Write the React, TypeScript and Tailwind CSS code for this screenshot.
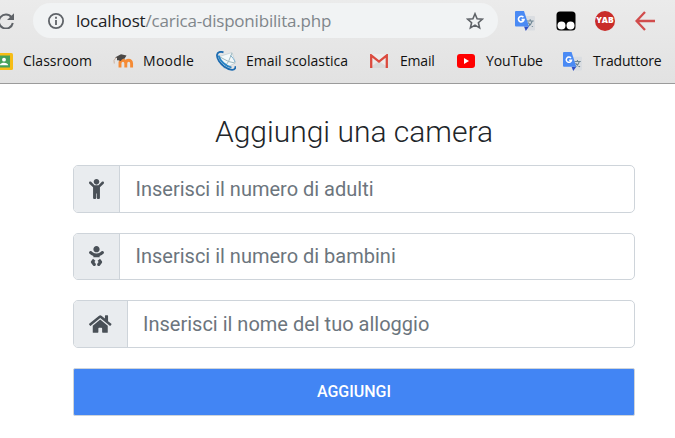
import React from "react";
import { FaBaby, FaChild, FaHome } from "react-icons/fa";

function TranslateIcon({ className }: { className: string }) {
  return (
    <svg viewBox="0 0 20 20" className={className}>
      <path d="M8.5 5H19a1 1 0 0 1 1 1v12.5a1 1 0 0 1-1 1h-6z" fill="#dadde1" />
      <path d="M12 10h6.700M15.200 8.300V10M17.200 10.200c-.7 2.500-2.300 4.300-4.200 5.300M13.200 11.500c1 2 2.600 3.300 4.800 4" stroke="#6f8794" strokeWidth="1.2" fill="none" />
      <path d="M9 15.500h5L10.800 20z" fill="#2f4fc4" />
      <path d="M1 0h8l5 15.500H1a1 1 0 0 1-1-1V1a1 1 0 0 1 1-1z" fill="#4a8af4" />
      <path d="M8.400 6.300A2.800 2.800 0 1 0 9 8.600H6.500" stroke="#fff" strokeWidth="1.6" fill="none" />
    </svg>
  );
}

function ReloadIcon() {
  return (
    <svg viewBox="0 0 16 16" className="-ml-0.5 size-4 shrink-0">
      <path d="M13.5 4.300A7 7 0 1 0 14.800 10" fill="none" stroke="#5f6368" strokeWidth="2" />
      <path d="M16 .2v6.900H9z" fill="#5f6368" />
    </svg>
  );
}

function InfoIcon() {
  return (
    <svg viewBox="0 0 16 16" className="size-4 shrink-0">
      <circle cx="8" cy="8" r="7.1" fill="none" stroke="#5f6368" strokeWidth="1.8" />
      <path d="M8 7v5M8 3.800v1.900" stroke="#5f6368" strokeWidth="1.8" />
    </svg>
  );
}

function StarIcon() {
  return (
    <svg viewBox="0 0 18 18" className="size-[18px] shrink-0">
      <path d="M9 1.800l2.100 5 5.300.4-4 3.500 1.200 5.200L9 13.100l-4.600 2.800 1.200-5.200-4-3.500 5.300-.4z" fill="none" stroke="#5f6368" strokeWidth="1.6" />
    </svg>
  );
}

function ClassroomIcon() {
  return (
    <svg viewBox="0 0 18 17" className="-ml-[5px] h-[17px] w-[18px]">
      <rect width="18" height="17" rx="1.5" fill="#f6bd16" />
      <rect x="2.5" y="2.5" width="12.5" height="12" fill="#46a15a" />
      <circle cx="9" cy="6.700" r="1.900" fill="#fff" />
      <path d="M4.800 12.300c0-3.500 8.400-3.500 8.400 0zM2.500 12h1.200v1H2.500z" fill="#fff" />
    </svg>
  );
}

function MoodleIcon() {
  return (
    <svg viewBox="0 0 21 14" className="h-3.5 w-[21px]">
      <path d="M7 13.500V7.500M7 9.500c0-4.400 5.800-4.400 5.800 0v4V9.500c0-4.400 5.800-4.400 5.800 0v4" fill="none" stroke="#f58b35" strokeWidth="2.900" />
      <path d="M2 3.400L8 .3l5.500 1.200-2 3.300C9.500 4.500 8.500 5.500 8 7 5.500 6 4.500 6 4 6.300V4z" fill="#4a4745" />
      <path d="M3 3.600L1 6.500l.3 3" stroke="#c9ac98" strokeWidth=".9" fill="none" />
    </svg>
  );
}

function SchoolMailIcon() {
  return (
    <svg viewBox="0 0 20 20" className="size-5">
      <path d="M3.500 5.500L16 1.500 19.500 12 8 17.500z" fill="#f3f8f9" stroke="#b3c6cb" strokeWidth=".6" />
      <path d="M4 6l8.500 4.500L16 2M8 17l4.500-6.500 6.500 1.500" stroke="#9cb6bd" strokeWidth="1" fill="none" />
      <path d="M7.500 1.300C4.500.2 1.500 1 1 4c-.4 3.500 3 8.500 7.500 11.800 4.500 3.200 9 4 10.500 1.700.4-.6.400-1.500.2-2.300" stroke="#1c6bb0" strokeWidth="1.800" fill="none" />
      <path d="M2.500 4.500c1.500 5.500 7 10.500 13 12" stroke="#2884c5" strokeWidth="1.800" fill="none" />
      <path d="M14.500 4.500c2 1.800 3.800 4 4.500 6.500" stroke="#79afd2" strokeWidth="1" fill="none" />
    </svg>
  );
}

function GmailIcon() {
  return (
    <svg viewBox="0 0 18 14" className="h-3.5 w-[18px]">
      <rect width="18" height="14" rx="1" fill="#ececec" />
      <path d="M2 12l7-5 7 5v2H2z" fill="#dadada" />
      <path d="M1.200 14V1.400L9 7.600l7.800-6.200V14" fill="none" stroke="#db4b3f" strokeWidth="2.3" />
    </svg>
  );
}

function YouTubeIcon() {
  return (
    <svg viewBox="0 0 18 14" className="h-3.5 w-[18px]">
      <rect width="18" height="14" rx="3" fill="#f00" />
      <path d="M7 4v6l5-3z" fill="#fff" />
    </svg>
  );
}

function Bookmark({ icon, label, tracking }: { icon: React.ReactNode; label: string; tracking: string }) {
  return (
    <>
      <span className="flex items-center">{icon}</span>
      <span className={`whitespace-nowrap ${tracking}`}>{label}</span>
    </>
  );
}

function Browser() {
  return (
    <header className="h-[84px] border-b border-[#9b9b9b] bg-linear-to-b from-[#ebebeb] to-[#e2e2e2] font-['Open_Sans','Noto_Sans',sans-serif]">
      <div className="flex h-[41px] items-center">
        <ReloadIcon />
        <div className="ml-[19px] flex h-[35px] w-[465px] shrink-0 items-center rounded-full bg-[#f1f3f4] pr-3.5 pl-[15px]">
          <InfoIcon />
          <span className="ml-3 whitespace-nowrap text-[17px] tracking-[-0.2px] text-[#80868b]">
            <span className="text-[#202124]">localhost</span>/carica-disponibilita.php
          </span>
          <span className="ml-auto"><StarIcon /></span>
        </div>
        <TranslateIcon className="ml-[17px] size-5 shrink-0" />
        <svg viewBox="0 0 20 20" className="ml-[21px] size-5 shrink-0">
          <rect x=".5" y=".5" width="19" height="19" rx="3.5" fill="#000" />
          <circle cx="5.500" cy="14.500" r="4" fill="#fff" />
          <circle cx="14.500" cy="14.500" r="4" fill="#fff" />
        </svg>
        <span className="ml-[19px] flex size-5 shrink-0 items-center justify-center rounded-full bg-[#c92c29] text-[8.5px] font-extrabold text-white">YAB</span>
        <svg viewBox="0 0 20 20" className="ml-5 size-5 shrink-0">
          <path d="M20 10H2M10 1L1.500 10l8.500 9" fill="none" stroke="#d14c4c" strokeWidth="2.3" />
        </svg>
      </div>
      <nav className="grid h-10 grid-cols-[23px_90px_30px_73px_30px_124px_30px_57px_29px_77px_30px_82px] items-center text-sm text-[#111]">
        <Bookmark icon={<ClassroomIcon />} label="Classroom" tracking="tracking-[0px]" />
        <Bookmark icon={<MoodleIcon />} label="Moodle" tracking="tracking-[0.3px]" />
        <Bookmark icon={<SchoolMailIcon />} label="Email scolastica" tracking="tracking-[0px]" />
        <Bookmark icon={<GmailIcon />} label="Email" tracking="tracking-[-0.2px]" />
        <Bookmark icon={<YouTubeIcon />} label="YouTube" tracking="tracking-[-0.1px]" />
        <Bookmark icon={<TranslateIcon className="size-[19px]" />} label="Traduttore" tracking="tracking-[-0.2px]" />
      </nav>
    </header>
  );
}

function Field({ icon, placeholder }: { icon: React.ReactNode; placeholder: string }) {
  return (
    <div className="flex h-[47.5px] shrink-0 overflow-hidden rounded-[5px] border border-[#ced4da] bg-white">
      <span className="flex items-center border-r border-[#ced4da] bg-[#e9ecef] px-[15px] text-[#495057]">{icon}</span>
      <input className="min-w-0 flex-1 px-[15.5px] text-xl outline-none placeholder:text-[#6c757d] placeholder:opacity-100" placeholder={placeholder} />
    </div>
  );
}

export default function App() {
  return (
    <div className="h-[438px] overflow-hidden bg-white">
      <Browser />
      <main className="ml-[73px] w-[562px] pt-[30px] font-[Roboto,sans-serif]">
        <h1 className="h-[51px] text-center text-[30px] leading-9 font-light text-[#212529]">Aggiungi una camera</h1>
        <form className="flex flex-col gap-5">
          <Field icon={<FaChild className="h-5 w-[15px]" />} placeholder="Inserisci il numero di adulti" />
          <Field icon={<FaBaby className="h-5 w-[15px]" />} placeholder="Inserisci il numero di bambini" />
          <Field icon={<FaHome className="h-5 w-[22.5px]" />} placeholder="Inserisci il nome del tuo alloggio" />
          <button type="button" className="h-12 rounded-xs border border-[#ced4da] bg-[#4285f4] text-base font-medium text-white">AGGIUNGI</button>
        </form>
      </main>
    </div>
  );
}
